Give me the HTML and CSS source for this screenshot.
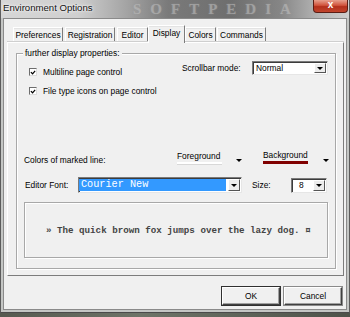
FILE: index.html
```html
<!DOCTYPE html>
<html lang="en">
<head>
    <meta charset="UTF-8">
    <title>Environment Options</title>
    <link rel="stylesheet" href="styles.css">
</head>
<body>
    <div class="window">
        <!-- Title bar -->
        <div class="titlebar">
            <span class="title">Environment Options</span>
            <span class="watermark">SOFTPEDIA</span>
            <div class="close-btn">x</div>
        </div>

        <div class="client">
            <div class="tabs">
                <div class="tab tab-pref">Preferences</div>
                <div class="tab tab-reg">Registration</div>
                <div class="tab tab-editor">Editor</div>
                <div class="tab tab-display active">Display</div>
                <div class="tab tab-colors">Colors</div>
                <div class="tab tab-commands">Commands</div>
            </div>

            <div class="panel">
                <div class="group">
                    <span class="legend">further display properties:</span>

                    <div class="top-row">
                        <div class="checks">
                            <div class="check">
                                <span class="box">
                                    <svg width="7" height="7" viewBox="0 0 7 7"><path d="M1 3 L3 5 L6 1.5" fill="none" stroke="#000" stroke-width="1.4"/></svg>
                                </span>
                                Multiline page control
                            </div>
                            <div class="check">
                                <span class="box">
                                    <svg width="7" height="7" viewBox="0 0 7 7"><path d="M1 3 L3 5 L6 1.5" fill="none" stroke="#000" stroke-width="1.4"/></svg>
                                </span>
                                File type icons on page control
                            </div>
                        </div>
                        <div class="scroll-opt">
                            <span class="scroll-label">Scrollbar mode:</span>
                            <div class="combo combo-scroll">
                                <span class="combo-text">Normal</span>
                                <span class="drop"><i class="tri"></i></span>
                            </div>
                        </div>
                    </div>

                    <div class="color-row">
                        <span class="color-label">Colors of marked line:</span>
                        <span class="swatch fg">Foreground</span>
                        <i class="tri arrow-fg"></i>
                        <span class="swatch bg">Background</span>
                        <i class="tri arrow-bg"></i>
                    </div>

                    <div class="font-row">
                        <span class="font-label">Editor Font:</span>
                        <div class="combo combo-font">
                            <span class="combo-text selected">Courier New</span>
                            <span class="drop"><i class="tri"></i></span>
                        </div>
                        <span class="size-label">Size:</span>
                        <div class="combo combo-size">
                            <span class="combo-text">8</span>
                            <span class="drop"><i class="tri"></i></span>
                        </div>
                    </div>

                    <div class="preview">» The quick brown fox jumps over the lazy dog. ¤</div>
                </div>
            </div>

            <div class="buttons">
                <button class="btn default">OK</button>
                <button class="btn">Cancel</button>
            </div>
        </div>
    </div>
</body>
</html>
```

FILE: styles.css
```css
body {
    margin: 0;
    width: 350px;
    height: 317px;
    overflow: hidden;
    background: linear-gradient(to right, #55594f, #6e7468 40%, #4d5249);
    font-family: "Liberation Sans", Arial, sans-serif;
    font-size: 8.4px;
    color: #000;
}
.window {
    height: 313px;
    box-sizing: border-box;
    display: flex;
    flex-direction: column;
    background: #c4c6c4;
    border-left: 1px solid #5c5c5c;
    border-right: 1px solid #5c5c5c;
    border-bottom: 1px solid #4a4a4a;
}

/* title bar */
.titlebar {
    height: 18px;
    position: relative;
    background: linear-gradient(to right, #d6d6d6 0%, #cfcfcf 22%, #a4a4a4 36%, #7a7a7a 48%, #6e6e6e 66%, #858585 80%, #b8b8b8 92%, #cfcfcf 100%);
}
.title {
    position: absolute;
    left: 2px;
    top: 2px;
    font-size: 9.6px;
    line-height: 12px;
    color: #111;
    text-shadow: 0 0 4px #fff, 0 0 2px #fff;
}
.watermark {
    position: absolute;
    left: 132px;
    top: 1px;
    font-family: "Liberation Serif", serif;
    font-weight: bold;
    font-size: 15px;
    line-height: 16px;
    letter-spacing: 9px;
    color: #bdbdbd;
    opacity: 0.6;
    text-shadow: 0 0 2px #9a9a9a;
}
.close-btn {
    position: absolute;
    right: 1px;
    top: 0;
    width: 35px;
    height: 13px;
    box-sizing: border-box;
    border: 1px solid #5b1d14;
    border-top: none;
    border-radius: 0 0 4px 4px;
    background: linear-gradient(#e7a08e, #d0533c 45%, #b3301c 55%, #c2452d);
    color: #fff;
    font-weight: bold;
    font-size: 10px;
    line-height: 9px;
    text-align: center;
}

/* client area */
.client {
    flex: 1;
    margin: 0 2px 2px 2px;
    background: #f0f0f0;
    border: 1px solid #8a8a8a;
    display: flex;
    flex-direction: column;
}
.tabs {
    height: 23px;
    box-sizing: border-box;
    display: flex;
    align-items: flex-end;
    padding-left: 9px;
}
.tab {
    height: 15px;
    box-sizing: border-box;
    border-top: 1px solid #fff;
    border-left: 1px solid #fff;
    border-right: 1px solid #7c7c7c;
    box-shadow: inset 0 1px 0 #e3e3e3;
    text-align: center;
    line-height: 14px;
    margin-right: 2px;
}
.tab-pref { width: 50px; }
.tab-reg { width: 50px; }
.tab-editor { width: 31px; margin-right: 0; }
.tab-display { width: 37px; margin-right: 0; }
.tab-colors { width: 31px; margin-right: 1px; }
.tab-commands { width: 49px; }
.tab.active {
    height: 18px;
    margin-bottom: -1px;
    line-height: 14px;
    background: #f0f0f0;
    position: relative;
    z-index: 1;
}

.panel {
    height: 234px;
    box-sizing: border-box;
    margin: 0 2px 0 3px;
    border-top: 1px solid #fff;
    border-left: 1px solid #fff;
    border-right: 1px solid #7c7c7c;
    border-bottom: 1px solid #7c7c7c;
    box-shadow: 0 -1px 0 #cfcfcf;
    padding: 10px 0 0 8px;
}
.group {
    width: 320px;
    height: 216px;
    box-sizing: border-box;
    border: 1px solid #a8a8a8;
    box-shadow: inset 1px 1px 0 #fff, 1px 1px 0 #fff;
    position: relative;
    padding-top: 7px;
}
.legend {
    position: absolute;
    left: 6px;
    top: -6px;
    padding: 0 2px;
    background: #f0f0f0;
    line-height: 11px;
}

/* check boxes + scrollbar */
.top-row {
    display: flex;
}
.checks {
    width: 153px;
    margin-left: 12px;
    padding-top: 4px;
    display: flex;
    flex-direction: column;
    gap: 5px;
}
.check {
    height: 14px;
    display: flex;
    align-items: center;
    gap: 6px;
}
.box {
    width: 8px;
    height: 8px;
    box-sizing: border-box;
    background: #fff;
    border: 1px solid #6d6d6d;
    border-right-color: #dcdcdc;
    border-bottom-color: #dcdcdc;
    display: flex;
    align-items: center;
    justify-content: center;
}
.box svg { display: block; }
.scroll-opt {
    display: flex;
    align-items: center;
    height: 14px;
}
.scroll-label { width: 70px; }

/* combo boxes */
.combo {
    height: 14px;
    box-sizing: border-box;
    background: #fff;
    border: 1px solid #7a7a7a;
    border-right-color: #e6e6e6;
    border-bottom-color: #e6e6e6;
    box-shadow: inset 1px 1px 0 #3c3c3c;
    display: flex;
    align-items: stretch;
}
.combo-scroll { width: 76px; }
.combo-text {
    flex: 1;
    padding-left: 3px;
    line-height: 12px;
}
.drop {
    width: 12px;
    margin: 1px 1px 1px 0;
    box-sizing: border-box;
    background: #ececec;
    border: 1px solid #fff;
    border-right-color: #555;
    border-bottom-color: #555;
    display: flex;
    align-items: center;
    justify-content: center;
}
.tri {
    display: inline-block;
    width: 0;
    height: 0;
    border-left: 3px solid transparent;
    border-right: 3px solid transparent;
    border-top: 3px solid #000;
}

/* colors of marked line */
.color-row {
    margin-top: 53px;
    height: 18px;
    display: flex;
    align-items: center;
}
.color-label {
    width: 153px;
    padding-left: 7px;
}
.swatch {
    width: 45px;
    line-height: 11px;
    margin-bottom: 6px;
}
.swatch.fg {
    border-bottom: 2px solid #fff;
    box-shadow: 0 1px 0 #d8d8d8;
}
.swatch.bg {
    border-bottom: 3px solid #800000;
}
.arrow-fg { margin: 0 21px 0 14px; }
.arrow-bg { margin-left: 15px; }

/* editor font */
.font-row {
    margin-top: 8px;
    display: flex;
    align-items: center;
}
.font-label {
    width: 53px;
    padding-left: 8px;
}
.combo-font {
    width: 164px;
    height: 16px;
}
.combo-text.selected {
    margin: 1px 2px 1px 0;
    padding-left: 2px;
    background: #3399ff;
    color: #fff;
    font-family: "Liberation Mono", "Courier New", monospace;
    font-size: 10.2px;
    line-height: 12px;
}
.size-label {
    width: 39px;
    margin-left: 10px;
}
.combo-size {
    width: 36px;
    height: 15px;
}
.combo-size .combo-text {
    padding-left: 7px;
}

/* preview */
.preview {
    margin: 9px 0 0 7px;
    width: 304px;
    height: 56px;
    box-sizing: border-box;
    border: 1px solid #a8a8a8;
    box-shadow: inset 1px 1px 0 #fff, 1px 1px 0 #fff;
    padding-left: 21px;
    line-height: 56px;
    font-family: "Liberation Mono", "Courier New", monospace;
    font-size: 9.2px;
    font-weight: bold;
    color: #444;
    white-space: nowrap;
}

/* dialog buttons */
.buttons {
    display: flex;
    justify-content: flex-end;
    gap: 4px;
    margin-top: 11px;
    padding-right: 4px;
}
.btn {
    width: 58px;
    height: 18px;
    padding: 0;
    background: #f0f0f0;
    border: 1px solid #fff;
    border-right-color: #404040;
    border-bottom-color: #404040;
    box-shadow: inset -1px -1px 0 #a0a0a0, 0 0 0 1px #8a8a8a;
    font-family: "Liberation Sans", Arial, sans-serif;
    font-size: 8.4px;
    color: #000;
}
.btn.default {
    box-shadow: inset -1px -1px 0 #a0a0a0, 0 0 0 1px #303030;
}
```
